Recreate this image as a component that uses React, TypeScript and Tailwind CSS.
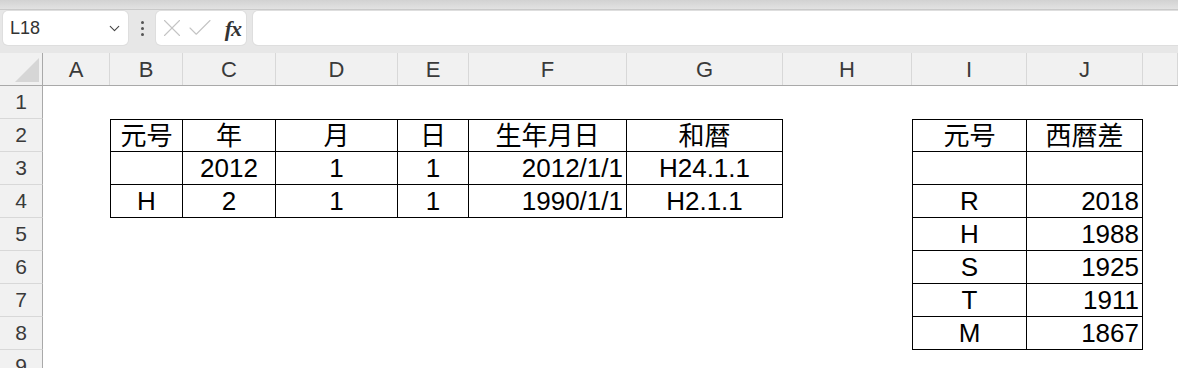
import { Check, ChevronDown, X } from 'lucide-react'

// K is only partly on screen, its letter falls outside the window
const colLetters = ['A', 'B', 'C', 'D', 'E', 'F', 'G', 'H', 'I', 'J', ''] as const
const colWidths = [
  'w-[67px]',
  'w-[73px]',
  'w-[93px]',
  'w-[122px]',
  'w-[71px]',
  'w-[158px]',
  'w-[156px]',
  'w-[129px]',
  'w-[115px]',
  'w-[116px]',
  'w-[35px]',
]

type Align = 'c' | 'r'
type Cell = { v: string; a?: Align }

// sheet contents keyed by row number, columns A..K
const sheet: Record<number, Record<number, Cell>> = {
  2: {
    1: { v: '元号' },
    2: { v: '年' },
    3: { v: '月' },
    4: { v: '日' },
    5: { v: '生年月日' },
    6: { v: '和暦' },
    8: { v: '元号' },
    9: { v: '西暦差' },
  },
  3: {
    2: { v: '2012' },
    3: { v: '1' },
    4: { v: '1' },
    5: { v: '2012/1/1', a: 'r' },
    6: { v: 'H24.1.1' },
  },
  4: {
    1: { v: 'H' },
    2: { v: '2' },
    3: { v: '1' },
    4: { v: '1' },
    5: { v: '1990/1/1', a: 'r' },
    6: { v: 'H2.1.1' },
    8: { v: 'R' },
    9: { v: '2018', a: 'r' },
  },
  5: { 8: { v: 'H' }, 9: { v: '1988', a: 'r' } },
  6: { 8: { v: 'S' }, 9: { v: '1925', a: 'r' } },
  7: { 8: { v: 'T' }, 9: { v: '1911', a: 'r' } },
  8: { 8: { v: 'M' }, 9: { v: '1867', a: 'r' } },
}

const tables = [
  { r0: 2, r1: 4, c0: 1, c1: 6 },
  { r0: 2, r1: 8, c0: 8, c1: 9 },
]

function borders(row: number, col: number) {
  const t = tables.find((t) => row >= t.r0 && row <= t.r1 && col >= t.c0 && col <= t.c1)
  if (!t) return ''
  let cls = 'border-r border-b border-black'
  if (col === t.c0) cls += ' border-l'
  if (row === t.r0) cls += ' border-t'
  return cls
}

function FormulaBar() {
  return (
    <div className="h-[43px] bg-[#e7e7e7] flex items-start pt-px gap-[7px] pl-[3px]">
      <div className="w-[125px] h-[34px] bg-white rounded-[5px] flex items-center pl-[7px] pr-[5px] shadow-[0_0_0_1px_#dedede]">
        <span className="flex-1 text-[18px] text-[#333]">L18</span>
        <ChevronDown size={17} strokeWidth={1.6} className="text-[#444]" />
      </div>
      <div className="w-[14px] h-[34px] flex flex-col items-center justify-center gap-[3px]">
        <span className="w-[3px] h-[3px] rounded-full bg-[#555]" />
        <span className="w-[3px] h-[3px] rounded-full bg-[#555]" />
        <span className="w-[3px] h-[3px] rounded-full bg-[#555]" />
      </div>
      <div className="w-[90px] h-[34px] bg-white rounded-[5px] flex items-center pl-[1px] pr-[5px] shadow-[0_0_0_1px_#dedede]">
        <X size={30} strokeWidth={0.9} className="text-[#c4c4c4]" />
        <Check size={30} strokeWidth={0.9} className="text-[#c4c4c4] -ml-[2px]" />
        <span className="ml-auto font-['Liberation_Serif',serif] italic font-semibold text-[22px] text-[#333] tracking-[-1px]">fx</span>
      </div>
      <div className="flex-1 h-[34px] bg-white rounded-l-[5px] shadow-[0_0_0_1px_#dedede]" />
    </div>
  )
}

function ColumnHeader() {
  return (
    <div className="flex h-[33px] bg-[#f1f1f1] border-b border-[#a9a9a9]">
      <div className="w-[43px] shrink-0 border-r border-[#a9a9a9] relative">
        <svg width="24" height="24" viewBox="0 0 24 24" className="absolute left-[15px] top-[5px]">
          <polygon points="24,0 24,24 0,24" fill="#d6d6d6" />
        </svg>
      </div>
      {colLetters.map((l, i) => (
        <div
          key={i}
          className={`${colWidths[i]} shrink-0 flex items-center justify-center text-[22px] text-[#3a3a3a] border-r border-[#d8d8d8]`}
        >
          {l}
        </div>
      ))}
    </div>
  )
}

export default function App() {
  const rows = [1, 2, 3, 4, 5, 6, 7, 8, 9]
  return (
    <div className="w-[1178px] h-[368px] overflow-hidden bg-white font-['Liberation_Sans','Noto_Sans_CJK_JP',sans-serif]">
      <div className="h-[10px] bg-gradient-to-b from-[#d2d2d2] to-[#e2e2e2] border-b border-[#c9c9c9]" />
      <FormulaBar />
      <ColumnHeader />
      {rows.map((r) => (
        <div key={r} className="flex h-[33px]">
          <div className="w-[43px] shrink-0 bg-[#f1f1f1] border-r border-[#a9a9a9] border-b border-b-[#d8d8d8] flex items-center justify-center text-[21px] text-[#3a3a3a]">
            {r}
          </div>
          {colLetters.map((_, c) => {
            const cell = sheet[r]?.[c]
            return (
              <div
                key={c}
                className={`${colWidths[c]} shrink-0 flex items-center text-[26px] leading-none text-black ${
                  cell?.a === 'r' ? 'justify-end pr-[3px]' : 'justify-center'
                } ${borders(r, c)}`}
              >
                {cell?.v}
              </div>
            )
          })}
        </div>
      ))}
    </div>
  )
}
